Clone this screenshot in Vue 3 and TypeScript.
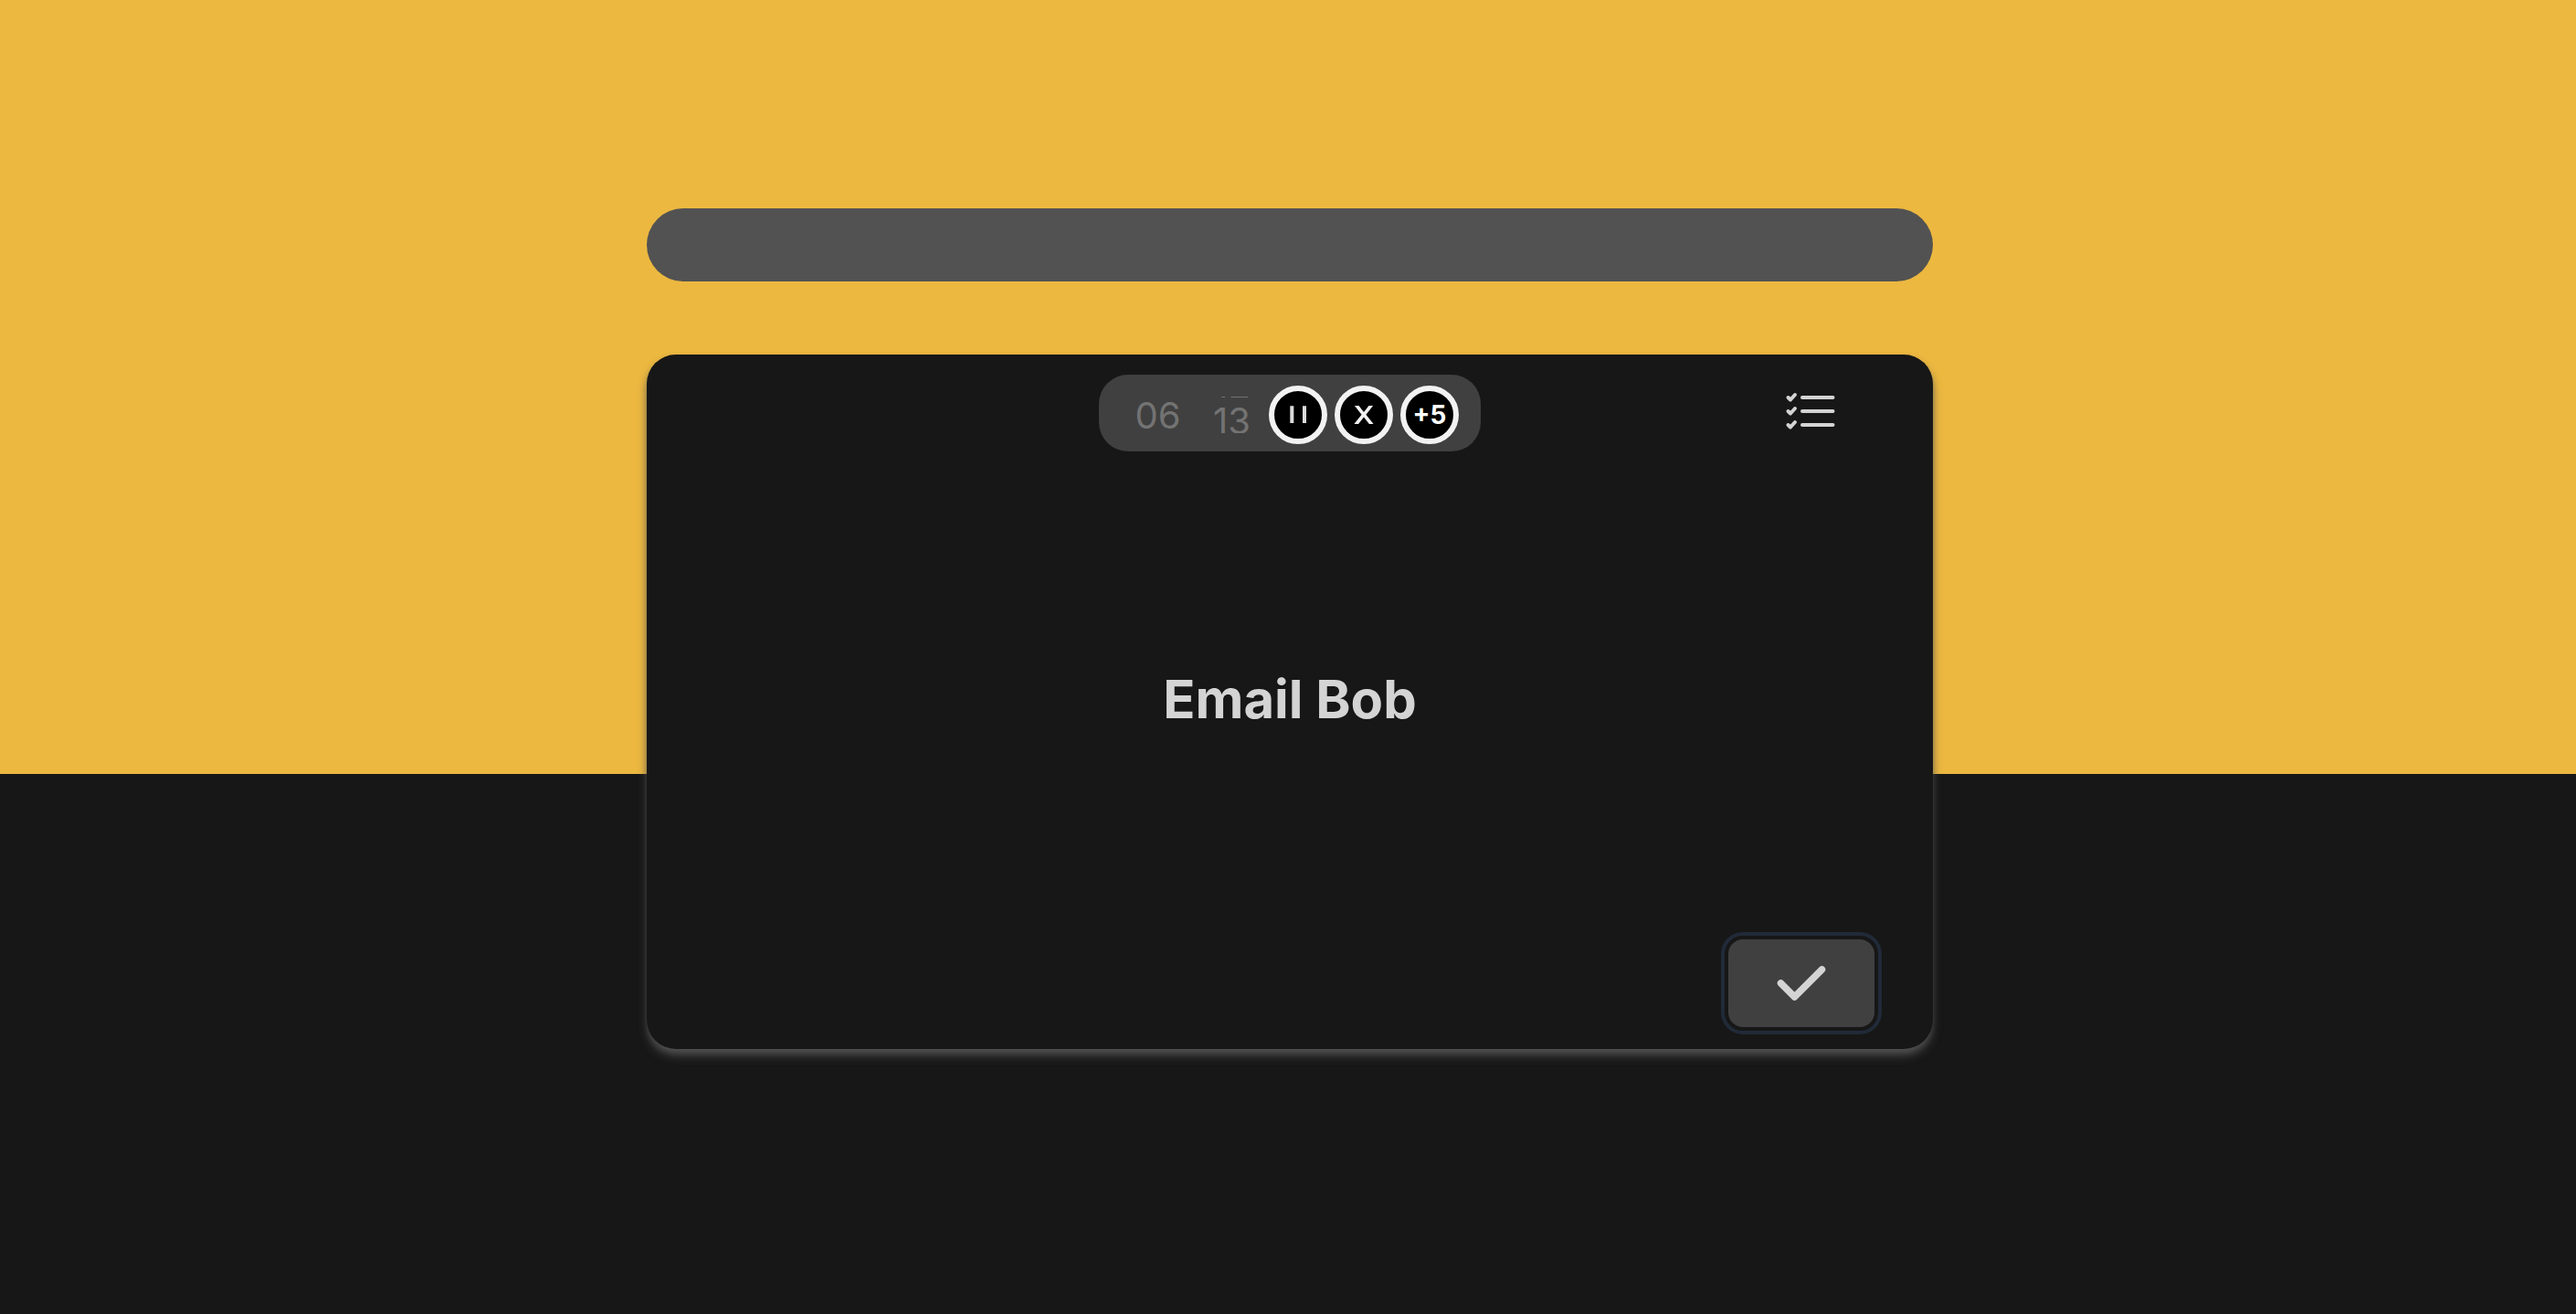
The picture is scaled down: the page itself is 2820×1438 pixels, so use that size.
<script setup lang="ts">
import { computed, ref } from 'vue'

const task = ref('Email Bob')
const minutes = ref(6)
const seconds = ref(13)
const progress = ref(0)

const rollOffset = ref(6)
const rowHeight = 40

const pad = (n: number): string => String(n).padStart(2, '0')

const minuteRow = computed(() => pad(minutes.value))
const secondRows = computed(() => [pad(seconds.value - 1), pad(seconds.value)])
const reelStyle = computed(() => ({
  transform: `translateY(${rollOffset.value - rowHeight}px)`,
}))
</script>

<template>
  <main class="page">
    <div class="column">
      <div
        class="progress"
        role="progressbar"
        aria-label="Progress"
        aria-valuemin="0"
        aria-valuemax="100"
        :aria-valuenow="progress"
      ></div>

      <section class="card">
        <header class="card-head">
          <div class="timer">
            <div class="digits" role="timer">
              <div class="window"><div class="row">{{ minuteRow }}</div></div>
              <div class="window rolling">
                <div class="reel" :style="reelStyle">
                  <div v-for="row in secondRows" :key="row" class="row">{{ row }}</div>
                </div>
              </div>
            </div>
            <div class="controls">
              <button type="button" class="round" aria-label="Pause">
                <svg width="52" height="52" viewBox="0 0 52 52" fill="none" stroke="#dcdcdc" stroke-width="4">
                  <path d="M19.300 16.300V35M33 16.300V35" />
                </svg>
              </button>
              <button type="button" class="round" aria-label="Stop">
                <svg width="52" height="52" viewBox="0 0 52 52" fill="#f2f2f2">
                  <path d="M15.900 16H20.500L26 22.900L31.500 16H36.100L28.400 25.700L36.600 36H31.900L26 28.500L20.100 36H15.400L23.600 25.700Z" />
                </svg>
              </button>
              <button type="button" class="round">+5</button>
            </div>
          </div>
          <button type="button" class="list" aria-label="Task list">
            <svg width="60" height="48" viewBox="0 0 60 48" fill="none" stroke="#d4d4d4" stroke-width="4" stroke-linecap="round" stroke-linejoin="round">
              <path d="M21 9H54.500M21 24H54.500M21 39H54.500" />
              <path d="M5.500 9L8 11.500L13 6M5.500 24L8 26.500L13 21M5.500 39L8 41.500L13 36" />
            </svg>
          </button>
        </header>

        <h1 class="title">{{ task }}</h1>

        <footer class="card-foot">
          <button type="button" class="done" aria-label="Complete task">
            <svg width="64" height="64" viewBox="0 0 64 64" fill="none" stroke="#d4d4d4" stroke-width="7.500" stroke-linecap="round" stroke-linejoin="round">
              <path d="M9.500 32L24.500 47L54.500 17" />
            </svg>
          </button>
        </footer>
      </section>
    </div>
  </main>
</template>

<style>
body {
  background: #171717;
}
</style>

<style scoped>
.page {
  box-sizing: border-box;
  min-height: 100vh;
  padding: 228px 0 0 4px;
  display: flex;
  justify-content: center;
  align-items: flex-start;
  background: linear-gradient(#ecb840 847px, #171717 847px);
  font-family: Inter, "Liberation Sans", sans-serif;
}

.column {
  width: 50%;
  display: flex;
  flex-direction: column;
  gap: 80px;
}

.progress {
  height: 80px;
  border-radius: 40px;
  background: #525252;
}

.card {
  box-sizing: border-box;
  min-height: 760px;
  padding: 22px 64px 24px;
  display: flex;
  flex-direction: column;
  border-radius: 32px;
  background: #171717;
  box-shadow: 0 8px 12px -2px #525252, 0 4px 8px -4px #525252;
}

.card-head {
  display: grid;
  grid-template-columns: 1fr auto 1fr;
  align-items: start;
}

.timer {
  grid-column: 2;
  display: flex;
  align-items: center;
  padding: 12px 24px 8px;
  border-radius: 32px;
  background: #404040;
}

.digits {
  display: flex;
  width: 162px;
  color: #737373;
  font-size: 40px;
  line-height: 42px;
  text-align: center;
}

.window {
  flex: 1;
  height: 40px;
}

.rolling {
  overflow: hidden;
}

.row {
  height: 40px;
}

.controls {
  display: flex;
  gap: 8px;
}

button {
  margin: 0;
  padding: 0;
  border: 0;
  background: none;
  font: inherit;
  cursor: pointer;
  display: flex;
  align-items: center;
  justify-content: center;
}

.round {
  box-sizing: border-box;
  width: 64px;
  height: 64px;
  border: 6px solid #f2f2f2;
  border-radius: 50%;
  background: #000;
  color: #fff;
  font-size: 28px;
  font-weight: 700;
  line-height: 32px;
}

.list {
  justify-self: end;
  margin: 16px 40px 0 0;
}

.title {
  margin: 0;
  padding-top: 8px;
  flex: 1;
  display: flex;
  align-items: center;
  justify-content: center;
  color: #d4d4d4;
  font-size: 58px;
  font-weight: 700;
  line-height: 72px;
}

.card-foot {
  display: flex;
  justify-content: flex-end;
}

.done {
  width: 160px;
  height: 96px;
  border-radius: 16px;
  background: #404040;
  outline: 4px solid #212a38;
  outline-offset: 4px;
}
</style>
